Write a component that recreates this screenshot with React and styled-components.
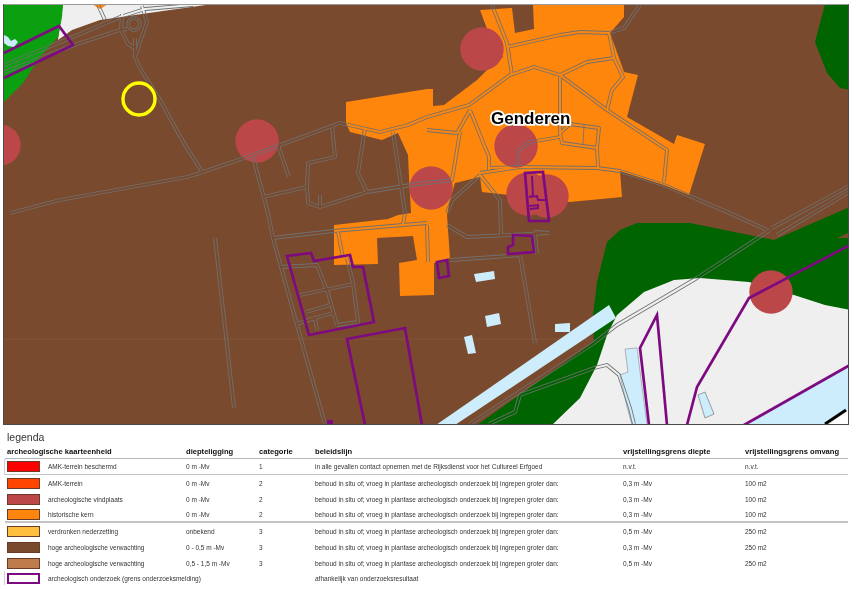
import React from 'react';
import styled, { createGlobalStyle } from 'styled-components';

const GlobalStyle = createGlobalStyle`
  html, body {
    margin: 0;
    padding: 0;
    background: #fff;
    font-family: "Liberation Sans", Arial, sans-serif;
  }
`;

const Page = styled.div`
  width: 857px;
  height: 589px;
  overflow: hidden;
  padding: 4px 0 0 3px;
  box-sizing: border-box;
  filter: blur(0.3px);
`;

const MapFrame = styled.div`
  position: relative;
  width: 846px;
  height: 421px;
  box-sizing: border-box;
  border: 1px solid #4a4a4a;
  border-top-color: #9a9a9a;
  overflow: hidden;
`;

const MapSvg = styled.svg`
  display: block;
  width: 100%;
  height: 100%;
`;

const PlaceName = styled.span`
  position: absolute;
  left: 487px;
  top: 104px;
  font-size: 17px;
  line-height: 20px;
  font-weight: 700;
  color: #000;
  -webkit-text-stroke: 3.5px #fff;
  paint-order: stroke fill;
`;

const Legend = styled.section`
  padding: 5px 0 0 2px;
  width: 843px;
  color: #333;
`;

const Title = styled.h2`
  margin: 0 0 0 2px;
  font-size: 10.5px;
  line-height: 14px;
  font-weight: 400;
`;

const columns = '41px 138px 73px 56px 308px 122px 1fr';

const HeaderRow = styled.div`
  display: grid;
  grid-template-columns: ${columns};
  height: 14px;
  align-items: center;
  padding-left: 2px;
  font-size: 7.6px;
  font-weight: 700;
  color: #111;
  border-bottom: 1px solid #b5b5b5;
`;

const HeaderName = styled.div`
  grid-column: span 2;
`;

const Row = styled.div`
  display: grid;
  grid-template-columns: ${columns};
  height: ${(p) => p.$height || 16}px;
  box-sizing: border-box;
  align-items: center;
  padding-left: 2px;
  font-size: 6.5px;
  white-space: nowrap;
  border-bottom: ${(p) => p.$rule || 0}px solid #c4c4c4;
  margin-left: ${(p) => (p.$tick ? -1 : 0)}px;
  border-left: ${(p) => (p.$tick ? '1px solid #cfcfcf' : 0)};
`;

const Swatch = styled.span`
  display: block;
  width: 33px;
  height: 11px;
  box-sizing: border-box;
  background: ${(p) => p.$fill};
  border: ${(p) => (p.$outline ? '2px solid #7d0a80' : '1px solid #6b3a28')};
`;

const orange = '#ff860d';
const rowsData = [
  { fill: '#ff0000', name: 'AMK-terrein beschermd', depth: '0 m -Mv', cat: '1', policy: 'in alle gevallen contact opnemen met de Rijksdienst voor het Cultureel Erfgoed', limit: 'n.v.t.', size: 'n.v.t.', rule: 1, tick: true },
  { fill: '#ff4500', name: 'AMK-terrein', depth: '0 m -Mv', cat: '2', limit: '0,3 m -Mv', size: '100 m2' },
  { fill: '#bc4749', name: 'archeologische vindplaats', depth: '0 m -Mv', cat: '2', limit: '0,3 m -Mv', size: '100 m2' },
  { fill: orange, name: 'historische kern', depth: '0 m -Mv', cat: '2', limit: '0,3 m -Mv', size: '100 m2', rule: 2 },
  { fill: '#ffc040', name: 'verdronken nederzetting', depth: 'onbekend', cat: '3', limit: '0,5 m -Mv', size: '250 m2' },
  { fill: '#7a4a2e', name: 'hoge archeologische verwachting', depth: '0 - 0,5 m -Mv', cat: '3', limit: '0,3 m -Mv', size: '250 m2' },
  { fill: '#be7c4d', name: 'hoge archeologische verwachting', depth: '0,5 - 1,5 m -Mv', cat: '3', limit: '0,5 m -Mv', size: '250 m2' },
  { fill: '#fff', outline: true, name: 'archeologisch onderzoek (grens onderzoeksmelding)', policy: 'afhankelijk van onderzoeksresultaat', height: 14, tick: true },
];

const defaultPolicy = 'behoud in situ of; vroeg in planfase archeologisch onderzoek bij ingrepen groter dan:';

const roads = [
  'M4,65 L73,37 L120,17 L145,9 L193,5',
  'M4,72 L77,44 L120,30 L127,29',
  'M98,5 L105,20',
  'M122,14 L121,30 L128,44 L135,48',
  'M142,6 L147,22 L135,57',
  'M135,38 L135,57 L140,68 L160,100 L185,145 L203,173',
  'M10,213 L60,200 L187,177 L200,173 L253,155 L340,123 L380,132 L408,125 L427,117 L469,105 L510,75 L534,67 L560,75 L607,110 L667,150 L664,182',
  'M427,130 L457,133 L470,110',
  'M470,110 L489,157 L489,170',
  'M460,132 L452,180 L427,183',
  'M480,173 L520,167 L597,168 L620,171 L664,185 L734,215 L767,230',
  'M489,168 L520,167',
  'M480,175 L452,200 L447,213',
  'M480,175 L500,200 L501,235',
  'M447,225 L467,237 L549,233',
  'M560,77 L560,133 L562,143 L597,148 L599,128 L570,124 L560,133',
  'M597,148 L598,168',
  'M560,137 L530,142 L519,150 L517,165',
  'M492,5 L507,43 L512,75',
  'M507,47 L560,35 L580,32 L609,33 L614,58 L623,77 L612,90 L607,110',
  'M560,75 L587,62 L614,58',
  'M609,33 L624,28 L640,5',
  'M770,230 L697,278 L617,325 L594,343 L470,424',
  'M777,235 L849,192',
  'M772,228 L849,186',
  'M520,255 L535,343',
  'M450,260 L494,257 L520,255',
  'M549,233 L535,232 L537,254',
  'M489,424 L515,412 L520,395 L594,368 L607,365 L619,375 L630,408 L634,424',
  'M253,157 L268,213 L273,238 L297,325 L325,424',
  'M278,145 L289,177',
  'M332,125 L335,157 L308,163 L307,187 L308,203 L320,207 L367,192 L398,187 L430,182',
  'M263,197 L307,187',
  'M365,128 L358,173 L367,192',
  'M393,132 L405,213 L403,225',
  'M320,195 L320,207',
  'M273,238 L333,231 L403,225 L427,223',
  'M338,232 L343,258',
  'M427,225 L428,262',
  'M280,267 L317,265 L328,293 L337,325',
  'M347,258 L353,283 L358,322 L337,325',
  'M300,295 L353,284',
  'M306,312 L330,305',
  'M308,320 L333,313',
  'M297,324 L315,318 L317,330',
  'M215,238 L234,408',
];

const MapDrawing = () => (
  <MapSvg viewBox="4 5 844 419" preserveAspectRatio="none">
    <defs>
      <mask id="roadMask" maskUnits="userSpaceOnUse" x="0" y="0" width="860" height="430">
        <g fill="none" strokeLinejoin="round">
          {roads.map((d) => <path key={d} d={d} stroke="#fff" strokeWidth="3.8" />)}
          <circle cx="134" cy="24" r="6" stroke="#fff" strokeWidth="3.4" />
          {roads.map((d) => <path key={`${d}i`} d={d} stroke="#000" strokeWidth="2.1" />)}
          <circle cx="134" cy="24" r="6" stroke="#000" strokeWidth="1.6" />
        </g>
      </mask>
    </defs>

    <rect x="0" y="0" width="860" height="430" fill="#7a4a2e" />
    <path d="M4,339 H849" stroke="#8a5a3e" strokeWidth="0.7" />

    {/* top left corner */}
    <path d="M63,4 L213,4 L170,10 L100,20 L72,30 L58,40 Z" fill="#efefef" />
    <path d="M4,4 L63,4 L62,17 L58,37 L40,57 L23,83 L4,102 Z" fill="#0ba00f" />
    <path d="M4,35 L8,37 L11,41 L15,39 L18,42 L14,47 L8,46 L4,43 Z" fill="#cdedfd" />
    <path d="M92,4 L108,4 L100,9 Z" fill={orange} />

    {/* green and grey land */}
    <path d="M825,4 L815,42 L827,73 L840,88 L850,90 L850,4 Z" fill="#006400" />
    <path d="M593,315 L597,282 L607,242 L620,230 L637,223 L690,223 L774,240 L850,207 L850,320 L552,425 L477,425 L594,342 Z" fill="#006400" />
    <path d="M837,238 L850,232 L850,238 Z" fill="#7a4a2e" />
    <path d="M552,425 L580,398 L597,365 L607,335 L617,315 L644,292 L674,280 L700,278 L749,282 L794,295 L825,305 L850,310 L850,425 Z" fill="#efefef" />

    {/* water */}
    <path d="M609,305 L616,318 L455,425 L436,425 Z" fill="#cdedfd" />
    <path d="M474,274 L494,271 L495,279 L476,282 Z" fill="#cdedfd" />
    <path d="M485,316 L499,313 L501,324 L487,327 Z" fill="#cdedfd" />
    <path d="M555,324 L570,323 L570,332 L555,332 Z" fill="#cdedfd" />
    <path d="M464,337 L472,335 L476,353 L468,354 Z" fill="#cdedfd" />
    <path d="M625,349 L637,348 L647,425 L632,425 L627,407 L620,375 L628,372 Z" fill="#cdedfd" stroke="#8a8a8a" strokeWidth="0.6" />
    <path d="M698,395 L705,392 L714,414 L705,418 Z" fill="#cdedfd" stroke="#7a7a7a" strokeWidth="0.7" />
    <path d="M744,425 L850,365 L850,408 L824,425 Z" fill="#cdedfd" />
    <path d="M828,425 L850,410 L850,425 Z" fill="#fff" />
    <path d="M825,424 L846,410" stroke="#000" strokeWidth="3" />

    {/* historische kern */}
    <path
      d="M480,10 L512,8 L515,33 L534,29 L533,4 L624,4 L624,17 L610,33 L624,72 L638,75 L627,117 L674,144 L677,135 L705,144 L689,195 L664,185 L620,171 L622,197 L570,202 L482,192 L480,177 L455,183 L450,200 L447,215 L450,258 L434,263 L434,295 L400,296 L399,263 L417,260 L413,236 L377,238 L378,264 L334,265 L334,225 L388,219 L398,215 L411,213 L409,177 L408,155 L398,133 L382,140 L350,132 L346,123 L346,102 L427,89 L433,89 L433,106 L444,105 L477,80 L489,68 L503,57 L493,45 Z"
      fill={orange}
    />

    {/* vindplaatsen */}
    <g fill="#bc4749">
      <circle cx="257" cy="141" r="21.7" />
      <circle cx="0" cy="145" r="20.7" />
      <circle cx="482" cy="49" r="21.7" />
      <circle cx="516" cy="146" r="21.7" />
      <circle cx="528" cy="194" r="21.7" />
      <circle cx="547" cy="196" r="21.7" />
      <circle cx="431" cy="188" r="21.7" />
      <circle cx="771" cy="292" r="21.7" />
    </g>

    {/* wegen */}
    <rect x="0" y="0" width="860" height="430" fill="#6e7070" mask="url(#roadMask)" />
    <path d="M584,125 L583,145" stroke="#6e7070" strokeWidth="0.8" />

    {/* archeologisch onderzoek */}
    <g fill="none" stroke="#7d0a80" strokeWidth="2.7" strokeLinejoin="miter">
      <path d="M4,53 L59,26 L73,45 L4,78" />
      <path d="M287,256 L311,253 L314,261 L350,255 L353,267 L363,267 L374,322 L309,335 Z" />
      <path d="M365,425 L347,339 L405,328 L422,425" />
      <path d="M513,235 L532,236 L534,252 L508,254 L508,247 L513,245 Z" />
      <path d="M437,262 L447,260 L449,276 L439,278 Z" />
      <path d="M529,221 L525,173 L543,172 L549,221 Z" />
      <path d="M532,176 L533,196 L529,197 M529,197 L537,196 L538,200 L546,200 M529,206 L538,205 L538,208 L530,209" strokeWidth="2" />
      <path d="M649,425 L640,348 L657,315 L667,425" />
      <path d="M687,425 L697,387 L749,298 L850,245" />
      <path d="M744,425 L850,365" />
    </g>
    <rect x="327" y="420" width="6" height="5" fill="#7d0a80" />

    <circle cx="139" cy="99" r="16" fill="none" stroke="#ffff00" strokeWidth="3.4" />
  </MapSvg>
);

const App = () => (
  <Page>
    <GlobalStyle />
    <MapFrame>
      <MapDrawing />
      <PlaceName>Genderen</PlaceName>
    </MapFrame>
    <Legend>
      <Title>legenda</Title>
      <HeaderRow>
        <HeaderName>archeologische kaarteenheid</HeaderName>
        <div>diepteligging</div>
        <div>categorie</div>
        <div>beleidslijn</div>
        <div>vrijstellingsgrens diepte</div>
        <div>vrijstellingsgrens omvang</div>
      </HeaderRow>
      {rowsData.map((r) => (
        <Row key={r.fill} $rule={r.rule} $height={r.height} $tick={r.tick}>
          <Swatch $fill={r.fill} $outline={r.outline} />
          <div>{r.name}</div>
          <div>{r.depth}</div>
          <div>{r.cat}</div>
          <div>{r.policy || defaultPolicy}</div>
          <div>{r.limit}</div>
          <div>{r.size}</div>
        </Row>
      ))}
    </Legend>
  </Page>
);

export default App;
